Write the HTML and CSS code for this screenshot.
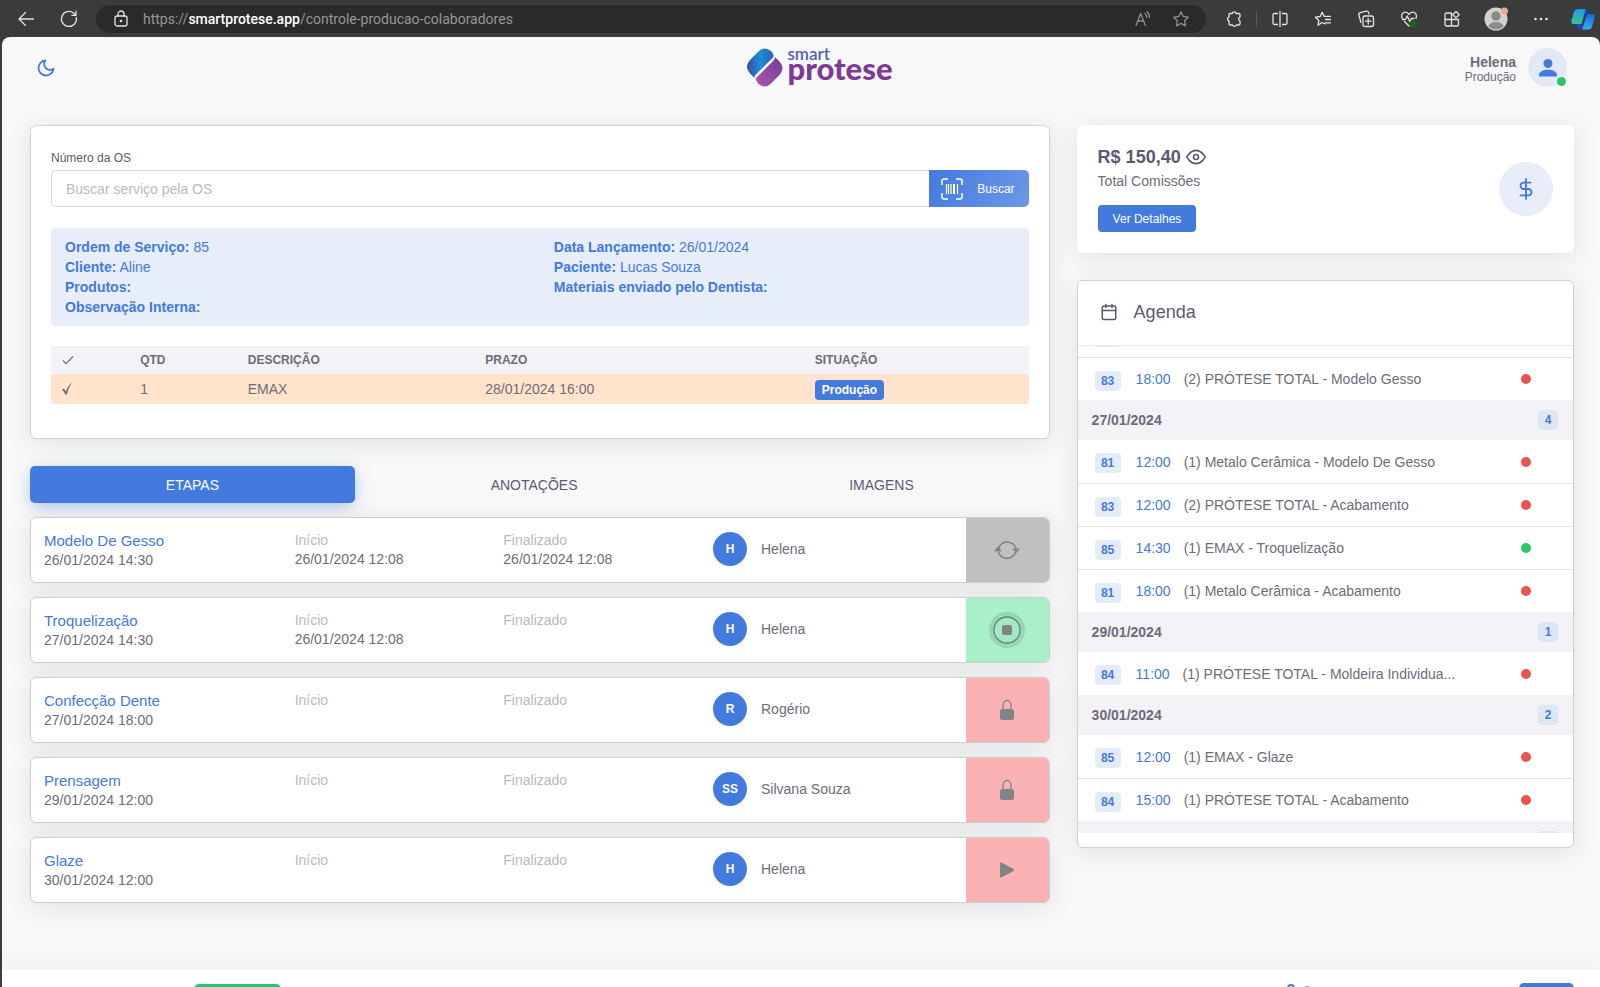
FILE: index.html
```
<!DOCTYPE html>
<html lang="pt-BR">
<head>
<meta charset="utf-8">
<title>Smart Protese</title>
<link rel="stylesheet" href="styles.css">
</head>
<body>
<svg class="sprite" aria-hidden="true">
  <symbol id="i-lock" viewBox="0 0 16 22"><path d="M4 11V6a4 4.500 0 0 1 8 0v5" fill="none" stroke="currentColor" stroke-width="1.300"/><rect x="1" y="10" width="14" height="11" rx="2.500" fill="currentColor"/></symbol>
</svg>

<div class="browser">
  <div class="toolbar">
    <button class="tool" aria-label="Voltar"><svg width="20" height="20" viewBox="0 0 20 20"><path d="M17.500 10H3M9.500 3.500 3 10l6.500 6.500"/></svg></button>
    <button class="tool" aria-label="Recarregar"><svg width="20" height="20" viewBox="0 0 20 20"><path d="M17.300 8.500A7.500 7.500 0 1 1 14.500 4l2.300 2M17 2.200V6.300H12.800"/></svg></button>
    <div class="address">
      <svg class="lock" width="16" height="18" viewBox="0 0 16 18"><rect x="2" y="6" width="12" height="10" rx="2"/><path d="M5 6V4a3 3 0 0 1 6 0v2"/><circle cx="8" cy="11" r=".7" fill="currentColor"/></svg>
      <span class="url">https://<b>smartprotese.app</b>/controle-producao-colaboradores</span>
      <button class="tool dim" aria-label="Ler em voz alta"><svg width="18" height="18" viewBox="0 0 18 18"><path d="M2 15.500 6.700 3.500l4.700 12M3.800 11h5.800M11 3.500a5 5 0 0 1 1.800 4M13 1.500a8 8 0 0 1 2.600 6"/></svg></button>
      <button class="tool dim" aria-label="Favoritar"><svg width="18" height="18" viewBox="0 0 18 18"><path d="m9 1.800 2.200 4.700 5.100.7-3.700 3.500.9 5.200L9 13.400l-4.500 2.500.9-5.200L1.700 7.200l5.100-.7z"/></svg></button>
    </div>
    <button class="tool" aria-label="Extensões"><svg width="18" height="18" viewBox="0 0 18 18"><path d="M5 3.500h2.200a2 2 0 0 1 3.900 0H14a1 1 0 0 1 1 1v2.700a2 2 0 0 0 0 3.800v3a1 1 0 0 1-1 1h-2.700a2 2 0 0 1-3.800 0H5a1 1 0 0 1-1-1v-3a2 2 0 0 1 0-3.900V4.500a1 1 0 0 1 1-1z"/></svg></button>
    <span class="divider"></span>
    <button class="tool" aria-label="Tela dividida"><svg width="18" height="18" viewBox="0 0 18 18"><path d="M6.500 3.500h-3a1.500 1.500 0 0 0-1.500 1.500v8a1.500 1.500 0 0 0 1.500 1.500h3M11.500 3.500h3A1.500 1.500 0 0 1 16 5v8a1.500 1.500 0 0 1-1.500 1.500h-3M9 1.500v15"/></svg></button>
    <button class="tool" aria-label="Favoritos"><svg width="18" height="18" viewBox="0 0 18 18"><path d="M11 13.800 8 12.500l-4 2.800.8-4.800L1.500 7.200l4.700-.7L8.200 2.200l1.900 4.100h6.400M11.500 9.500h5M11.500 12.800h5"/></svg></button>
    <button class="tool" aria-label="Coleções"><svg width="18" height="18" viewBox="0 0 18 18"><rect x="6" y="6" width="10.500" height="10.500" rx="2"/><path d="M11.200 8.500v5.500M8.500 11.200H14M4 12.500 1.800 5a2 2 0 0 1 1.400-2.300l6-1.500A2 2 0 0 1 11.600 2.600L12 4"/></svg></button>
    <button class="tool" aria-label="Desempenho"><svg width="18" height="18" viewBox="0 0 18 18"><path d="M2.200 8.500C.5 4.500 3 2.200 5.200 2.200 7.300 2.200 8.500 3.500 9 4.500c.5-1 1.700-2.300 3.800-2.300 2.400 0 4.700 2.500 3.200 6.300M2.500 9.500h3L7.300 6l2.500 5.500 1.600-3h2.500M4.500 11.500 9 16"/><circle cx="13" cy="14" r="3.500" fill="#0f6b14" stroke="none"/></svg></button>
    <button class="tool" aria-label="Aplicativos"><svg width="18" height="18" viewBox="0 0 18 18"><path d="M2 4.500A1.500 1.500 0 0 1 3.500 3H8.500v13h-5A1.500 1.500 0 0 1 2 14.500zM2 9.500h13.500v5a1.500 1.500 0 0 1-1.500 1.500H8.500"/><path d="m13 1.500 3.200 3.200L13 7.900 9.800 4.700z"/></svg></button>
    <button class="tool wide" aria-label="Perfil"><svg width="26" height="26" viewBox="0 0 26 26"><circle cx="13" cy="13" r="11.500" fill="#d3d2d1" stroke="none"/><circle cx="13" cy="10" r="4.700" fill="#8b8a88" stroke="none"/><path d="M5.500 20.500c1-6 14-6 15 0a11.500 11.500 0 0 1-15 0z" fill="#8b8a88" stroke="none"/><circle cx="21.500" cy="5" r="3.500" fill="#f3a596" stroke="none"/></svg></button>
    <button class="tool wide" aria-label="Mais"><svg width="18" height="18" viewBox="0 0 18 18"><g fill="currentColor" stroke="none"><circle cx="3.500" cy="9" r="1.300"/><circle cx="9" cy="9" r="1.300"/><circle cx="14.500" cy="9" r="1.300"/></g></svg></button>
    <button class="tool" aria-label="Copilot"><svg width="26" height="24" viewBox="0 0 26 24"><defs><linearGradient id="cp1" x1="0" y1="0" x2="0" y2="1"><stop offset="0" stop-color="#1b9be8"/><stop offset="1" stop-color="#35c58a"/></linearGradient><linearGradient id="cp2" x1="0" y1="0" x2="0" y2="1"><stop offset="0" stop-color="#1464d8"/><stop offset="1" stop-color="#35b3f5"/></linearGradient></defs><path d="M15 2q2.500 0 3 5h-3l-3 10.500-1 5H9q-2.500-.5-2.500-5z" fill="#1746d1" stroke="none"/><path d="M8 2h7.500L11.500 17H3.500Q.5 17 1.500 13L4 5Q5 2 8 2z" fill="url(#cp1)" stroke="none"/><path d="M17 7h5q3.500 0 2.500 4l-2.300 8q-.8 3.500-4 3.500h-6z" fill="url(#cp2)" stroke="none"/></svg></button>
  </div>

  <div class="page">
    <header class="topbar">
      <button class="theme" aria-label="Modo escuro"><svg width="20" height="20" viewBox="0 0 24 24" fill="none" stroke="currentColor" stroke-width="2.200" stroke-linejoin="round"><path d="M21 12.800A9 9 0 1 1 11.200 3a7 7 0 0 0 9.800 9.800z"/></svg></button>
      <a class="logo" href="#" aria-label="Smart Protese">
        <svg width="36" height="40" viewBox="0 0 36 40"><defs><linearGradient id="lg1" x1="0" y1="0" x2="1" y2="0"><stop offset="0" stop-color="#3a4aa8"/><stop offset=".5" stop-color="#1c8fd2"/><stop offset="1" stop-color="#2a63b4"/></linearGradient><linearGradient id="lg2" x1="1" y1="0" x2="0" y2="1"><stop offset="0" stop-color="#6d3f98"/><stop offset="1" stop-color="#b056a8"/></linearGradient></defs><path d="M7.500 30 6 28.500Q0 23 0 19q0-4 4-8l8-8q6-5 12 0 4 4 2 6.500L9 26.500Q7 28.500 7.500 30z" fill="url(#lg1)"/><path d="M28 9l1.500 1.500Q35.500 16 35.500 20q0 4-4 8l-8 8q-6 5-12 0-4-4-2-6.500L26.500 12.500Q28.500 10.500 28 9z" fill="url(#lg2)"/></svg>
        <span class="wordmark"><span class="smart">smart</span><span class="protese">protese</span></span>
      </a>
      <div class="user">
        <div class="who"><b>Helena</b><span>Produção</span></div>
        <div class="photo"><svg width="20" height="20" viewBox="0 0 20 20"><circle cx="10" cy="5.500" r="4.500" fill="currentColor"/><path d="M1 18.500v-1.500c0-7 18-7 18 0v1.500z" fill="currentColor"/></svg><i class="online"></i></div>
      </div>
    </header>

    <main class="columns">
      <div class="left">
        <section class="card search">
          <label for="os">Número da OS</label>
          <form class="field"><input id="os" type="text" placeholder="Buscar serviço pela OS"><button type="button"><svg width="22" height="22" viewBox="0 0 22 22" fill="none" stroke="currentColor"><path stroke-width="1.500" d="M1 7V3a2 2 0 0 1 2-2h4M15 1h4a2 2 0 0 1 2 2v4M21 15v4a2 2 0 0 1-2 2h-4M7 21H3a2 2 0 0 1-2-2v-4"/><path stroke-width="1.200" d="M5.500 6v10M7.500 6v10M10 6v10M16.500 6v10"/><path stroke-width="2" d="M13 6v10"/></svg>Buscar</button></form>
          <div class="info">
            <div><p><b>Ordem de Serviço:</b> 85</p><p><b>Cliente:</b> Aline</p><p><b>Produtos:</b></p><p><b>Observação Interna:</b></p></div>
            <div><p><b>Data Lançamento:</b> 26/01/2024</p><p><b>Paciente:</b> Lucas Souza</p><p><b>Materiais enviado pelo Dentista:</b></p></div>
          </div>
          <table class="items">
            <thead><tr><th class="c1" aria-label="Selecionado"><svg width="12" height="10" viewBox="0 0 12 10" fill="none" stroke="currentColor" stroke-width="1.200"><path d="M1 5.500 4 8.700 11 1.500"/></svg></th><th class="c2">QTD</th><th class="c3">DESCRIÇÃO</th><th class="c4">PRAZO</th><th>SITUAÇÃO</th></tr></thead>
            <tbody><tr><td><svg width="10" height="12" viewBox="0 0 10 12"><path d="M0 6.500 2 5.500 3.800 8.500Q6 3 9 .3h.5Q6.200 5.500 4.800 11.500H3.300Q2 8.500 0 6.500z" fill="currentColor"/></svg></td><td>1</td><td>EMAX</td><td>28/01/2024 16:00</td><td><span class="status">Produção</span></td></tr></tbody>
          </table>
        </section>

        <nav class="tabs"><button class="active">ETAPAS</button><button>ANOTAÇÕES</button><button>IMAGENS</button></nav>

        <section class="steps">
          <article class="step"><div><h3>Modelo De Gesso</h3><p>26/01/2024 14:30</p></div><div><small>Início</small><p>26/01/2024 12:08</p></div><div><small>Finalizado</small><p>26/01/2024 12:08</p></div><div class="owner"><span>H</span>Helena</div><button class="act done" aria-label="Reabrir"><svg width="26" height="22" viewBox="0 0 26 22" fill="none" stroke="currentColor" stroke-width="1.600"><path d="M4.500 10a9 9 0 0 1 1.200-3A9.200 9.200 0 0 1 22 9.500M21.500 13a9 9 0 0 1-17.300-.5" /><path d="M0 12.200 3.800 7.500l4 4.700zM18.200 9.500H26l-3.800 4.700z" fill="currentColor" stroke="none"/></svg></button></article>
          <article class="step"><div><h3>Troquelização</h3><p>27/01/2024 14:30</p></div><div><small>Início</small><p>26/01/2024 12:08</p></div><div><small>Finalizado</small></div><div class="owner"><span>H</span>Helena</div><button class="act running" aria-label="Parar"><svg width="36" height="36" viewBox="0 0 36 36"><circle cx="18" cy="18" r="18" fill="#98d5b4"/><circle cx="18" cy="18" r="13" fill="#a5e9c4" stroke="#678577" stroke-width="1.300"/><rect x="13" y="13" width="10" height="10" rx="2" fill="#7d8583"/></svg></button></article>
          <article class="step"><div><h3>Confecção Dente</h3><p>27/01/2024 18:00</p></div><div><small>Início</small></div><div><small>Finalizado</small></div><div class="owner"><span>R</span>Rogério</div><button class="act blocked" aria-label="Bloqueado"><svg width="16" height="22"><use href="#i-lock"/></svg></button></article>
          <article class="step"><div><h3>Prensagem</h3><p>29/01/2024 12:00</p></div><div><small>Início</small></div><div><small>Finalizado</small></div><div class="owner"><span>SS</span>Silvana Souza</div><button class="act blocked" aria-label="Bloqueado"><svg width="16" height="22"><use href="#i-lock"/></svg></button></article>
          <article class="step"><div><h3>Glaze</h3><p>30/01/2024 12:00</p></div><div><small>Início</small></div><div><small>Finalizado</small></div><div class="owner"><span>H</span>Helena</div><button class="act blocked" aria-label="Iniciar"><svg width="16" height="18" viewBox="0 0 16 18"><path d="M2 2.500v13L14 9z" fill="currentColor" stroke="currentColor" stroke-width="2" stroke-linejoin="round"/></svg></button></article>
        </section>
      </div>

      <aside class="right">
        <section class="card total">
          <div>
            <div class="amount">R$ 150,40 <svg width="20" height="20" viewBox="0 0 24 24" fill="none" stroke="currentColor" stroke-width="2"><path d="M1 12s4-8 11-8 11 8 11 8-4 8-11 8S1 12 1 12z"/><circle cx="12" cy="12" r="3"/></svg></div>
            <p>Total Comissões</p>
            <button>Ver Detalhes</button>
          </div>
          <div class="coin"><svg width="22" height="22" viewBox="0 0 24 24" fill="none" stroke="currentColor" stroke-width="2" stroke-linecap="round" stroke-linejoin="round"><path d="M12 1v22M17 5H9.500a3.500 3.500 0 0 0 0 7h5a3.500 3.500 0 0 1 0 7H6"/></svg></div>
        </section>

        <section class="card agenda">
          <h2><svg width="18" height="18" viewBox="0 0 24 24" fill="none" stroke="currentColor" stroke-width="2" stroke-linecap="round" stroke-linejoin="round"><rect x="3" y="4" width="18" height="18" rx="2"/><path d="M16 2v4M8 2v4M3 10h18"/></svg>Agenda</h2>
          <div class="list" id="list">
            <ul><li><span class="num">&nbsp;</span></li>
            <li><span class="num">83</span><time>18:00</time><span class="what">(2) PRÓTESE TOTAL - Modelo Gesso</span><i class="dot"></i></li></ul>
            <h4>27/01/2024<span class="num">4</span></h4>
            <ul><li><span class="num">81</span><time>12:00</time><span class="what">(1) Metalo Cerâmica - Modelo De Gesso</span><i class="dot"></i></li>
            <li><span class="num">83</span><time>12:00</time><span class="what">(2) PRÓTESE TOTAL - Acabamento</span><i class="dot"></i></li>
            <li><span class="num">85</span><time>14:30</time><span class="what">(1) EMAX - Troquelização</span><i class="dot green"></i></li>
            <li><span class="num">81</span><time>18:00</time><span class="what">(1) Metalo Cerâmica - Acabamento</span><i class="dot"></i></li></ul>
            <h4>29/01/2024<span class="num">1</span></h4>
            <ul><li><span class="num">84</span><time>11:00</time><span class="what">(1) PRÓTESE TOTAL - Moldeira Individua...</span><i class="dot"></i></li></ul>
            <h4>30/01/2024<span class="num">2</span></h4>
            <ul><li><span class="num">85</span><time>12:00</time><span class="what">(1) EMAX - Glaze</span><i class="dot"></i></li>
            <li><span class="num">84</span><time>15:00</time><span class="what">(1) PRÓTESE TOTAL - Acabamento</span><i class="dot"></i></li></ul>
            <h4>&nbsp;<span class="num">&nbsp;</span></h4>
          </div>
        </section>
      </aside>
    </main>

    <footer class="footer">
      <span class="pill"></span>
      <svg class="mark" width="24" height="20" viewBox="0 0 24 20" fill="none" stroke="#437ade" stroke-width="2"><circle cx="4" cy="5" r="3"/><path d="M17 5.500a4 4 0 0 1 6 0"/></svg>
      <span class="cta"></span>
    </footer>
  </div>
</div>
<script src="script.js"></script>
</body>
</html>
```
FILE: styles.css
```
* { box-sizing: border-box; }
body { margin: 0; background: #3b3b3b; color: #6e6b7b; font: 14px/20px "Liberation Sans", Arial, sans-serif; }
button { border: 0; padding: 0; background: none; color: inherit; font: inherit; cursor: pointer; }
svg { display: block; flex: none; }
h2, h3, h4, p, ul { margin: 0; padding: 0; font-weight: 400; }
ul { list-style: none; }
.sprite { position: absolute; width: 0; height: 0; }

.browser { display: flex; flex-direction: column; height: 100vh; overflow: hidden; }
.toolbar { display: flex; align-items: center; flex: none; height: 37px; padding: 0 4px 0 16px; color: #e4e4e4; }
.tool { display: grid; place-items: center; flex: none; width: 43px; }
.toolbar > .tool:nth-child(1) { width: 20px; margin-right: 23px; }
.toolbar > .tool:nth-child(2) { width: 20px; margin-right: 17px; }
.tool svg, .lock { fill: none; stroke: currentColor; stroke-width: 1.3px; stroke-linejoin: round; stroke-linecap: round; }
.tool.wide { width: 45px; }
.toolbar > .tool:last-child { width: 26px; margin-left: 7px; }
.tool.dim { width: 38px; color: #8e8e8e; }
.address { display: flex; align-items: center; flex: 1; height: 28px; margin-right: 6px; padding: 0 6px 0 17px; border-radius: 14px; background: #2a2a2a; }
.url { flex: 1; margin-left: 14px; color: #979797; font: 14px/20px Roboto, sans-serif; }
.url b { color: #fff; font-weight: 500; }
.divider { width: 1px; height: 16px; margin: 0 1px; background: #5c5c5c; }

.page { display: flex; flex-direction: column; flex: 1; min-height: 0; margin-left: 2px; border-radius: 8px 8px 0 0; background: #f8f8f8; overflow: hidden; }
.topbar { display: grid; grid-template-columns: 1fr auto 1fr; align-items: center; flex: none; height: 61px; padding: 0 33px 0 34px; }
.theme { justify-self: start; color: #437ade; }
.logo { display: flex; align-items: center; gap: 4px; margin-left: 37px; text-decoration: none; font-family: Lato, sans-serif; }
.wordmark { display: grid; }
.smart { color: #5161b2; font-size: 17px; line-height: 12px; font-weight: 600; }
.protese { padding-bottom: 12px; color: #7f3a93; font-size: 31px; line-height: 16px; font-weight: 900; }
.user { display: flex; align-items: center; justify-self: end; gap: 12px; }
.who { display: grid; padding-top: 3px; text-align: right; line-height: 16px; }
.who span { font-size: 12px; line-height: 14px; }
.photo { position: relative; display: grid; place-items: center; width: 39px; height: 39px; border-radius: 50%; background: #e3e8f5; color: #437ade; }
.online { position: absolute; right: 1px; bottom: 1px; width: 9px; height: 9px; border-radius: 50%; background: #28c76f; }

.columns { display: grid; grid-template-columns: minmax(0, 2.05fr) minmax(0, 1fr); align-items: start; gap: 27px; padding: 27px 26px 67px 28px; flex: none; }
.card { border: 1px solid #cfd1d3; border-radius: 6px; background: #fff; box-shadow: 0 4px 24px rgba(34, 41, 47, .1); }
.search { padding: 22px 20px 34px; }
.search label { display: block; margin-bottom: 2px; color: #5e5873; font-size: 12px; }
.field { display: flex; margin-bottom: 21px; }
.field input { flex: 1; min-width: 0; height: 37px; padding: 0 14px; border: 1px solid #d8d6de; border-right: 0; border-radius: 5px 0 0 5px; font: inherit; }
.field input::placeholder { color: #b9b9c3; }
.field button { display: flex; align-items: center; gap: 14px; padding: 0 14px 0 12px; border-radius: 0 5px 5px 0; background: linear-gradient(118deg, #437ade, #6d98e8); color: #fff; font-size: 12px; }
.info { display: grid; grid-template-columns: 1fr 1fr; margin-bottom: 20px; padding: 9px 0; border-radius: 4px; background: #e7eef9; color: #437ade; }
.info div { padding: 0 14px; }
.items { width: 100%; border-collapse: separate; border-spacing: 0; table-layout: fixed; text-align: left; }
.items th { height: 28px; padding: 0 11px; background: #f3f2f7; font-size: 12px; }
.items td { height: 30px; padding: 0 11px; background: #ffe4cb; }
.items td:first-child { border-radius: 0 0 0 4px; }
.items td:last-child { border-radius: 0 0 4px 0; }
.c1 { width: 8%; } .c2 { width: 11%; } .c3 { width: 24.3%; } .c4 { width: 33.7%; }
.status { display: inline-block; padding: 0 7px; border-radius: 4px; background: #437ade; color: #fff; font-size: 12px; font-weight: 700; vertical-align: middle; }

.tabs { display: flex; margin: 27px 0 14px; }
.tabs button { flex: 1 1 auto; height: 37px; border-radius: 5px; color: #5e5873; }
.tabs .active { background: #437ade; color: #fff; box-shadow: 0 4px 18px -4px rgba(67, 122, 222, .65); }

.steps { display: grid; gap: 14px; }
.step { display: grid; grid-template-columns: 251fr 209fr 209fr 267fr 83px; min-height: 66px; border: 1px solid #cccdcf; border-radius: 6px; background: #fff; box-shadow: 0 4px 24px rgba(34, 41, 47, .1); overflow: hidden; }
.step > div { padding: 12px 13px 11px; line-height: 19px; }
.step h3 { color: #437ade; font-size: 15px; line-height: 21px; }
.step small { display: block; color: #b9b9c3; font-size: 14px; line-height: 20px; }
.step .owner { display: flex; align-items: center; gap: 14px; padding: 0 14px 2px; }
.owner span { display: grid; place-items: center; width: 34px; height: 34px; border-radius: 50%; background: #437ade; color: #fff; font-size: 12px; font-weight: 700; }
.act { display: grid; place-items: center; color: #7f8486; }
.done { background: #c0c0c0; }
.running { background: #a9efc8; }
.blocked { background: #fbb2b4; }

.right { display: grid; gap: 27px; }
.total { display: flex; align-items: center; justify-content: space-between; padding: 20px; border-color: #fff; }
.amount { display: flex; align-items: center; gap: 5px; color: #5e5873; font-size: 18px; line-height: 22px; font-weight: 700; }
.total p { margin: 3px 0 14px; }
.total button { height: 27px; padding: 0 15px; border-radius: 4px; background: #437ade; color: #fff; font-size: 12px; }
.coin { display: grid; place-items: center; width: 54px; height: 54px; border-radius: 50%; background: #e7edf9; color: #437ade; }
.agenda { padding-bottom: 14px; }
.agenda h2 { display: flex; align-items: center; gap: 16px; padding: 20px 22px 22px; border-bottom: 1px solid #ebe9f1; color: #5e5873; font-size: 18px; line-height: 22px; }
.list { height: 487px; overflow: auto; scrollbar-width: none; }
.list li { display: flex; align-items: center; height: 43px; padding: 0 42px 0 17px; }
.list li + li { border-top: 1px solid #e4e4ea; }
.num { padding: 0 6px; min-width: 20px; border-radius: 4px; background: #e5ecf9; color: #437ade; font-size: 12px; font-weight: 700; text-align: center; }
.list li .num { width: 26px; margin-top: 3px; }
.list time { margin: 0 13px 0 15px; color: #437ade; }
.what { flex: 1; overflow: hidden; text-overflow: ellipsis; white-space: nowrap; }
.dot { width: 10px; height: 10px; border-radius: 50%; background: #ea5455; }
.dot.green { background: #28c76f; }
.list h4 { display: flex; align-items: center; justify-content: space-between; height: 40px; padding: 0 15px 0 14px; background: #f3f2f7; font-size: 14px; font-weight: 700; }
.list h4 .num { background: #dfe6f4; }

.footer { display: flex; align-items: flex-start; flex: none; padding: 13px 26px 13px 192px; background: #fff; box-shadow: 0 -4px 20px rgba(34, 41, 47, .05); }
.pill { width: 87px; height: 30px; margin-top: 1px; border-radius: 5px; background: #28c76f; }
.mark { margin-left: auto; margin-right: 208px; }
.cta { width: 55px; height: 30px; border-radius: 5px; background: #437ade; }
```
FILE: script.js
```
document.getElementById('list').scrollTop = 32;
```
